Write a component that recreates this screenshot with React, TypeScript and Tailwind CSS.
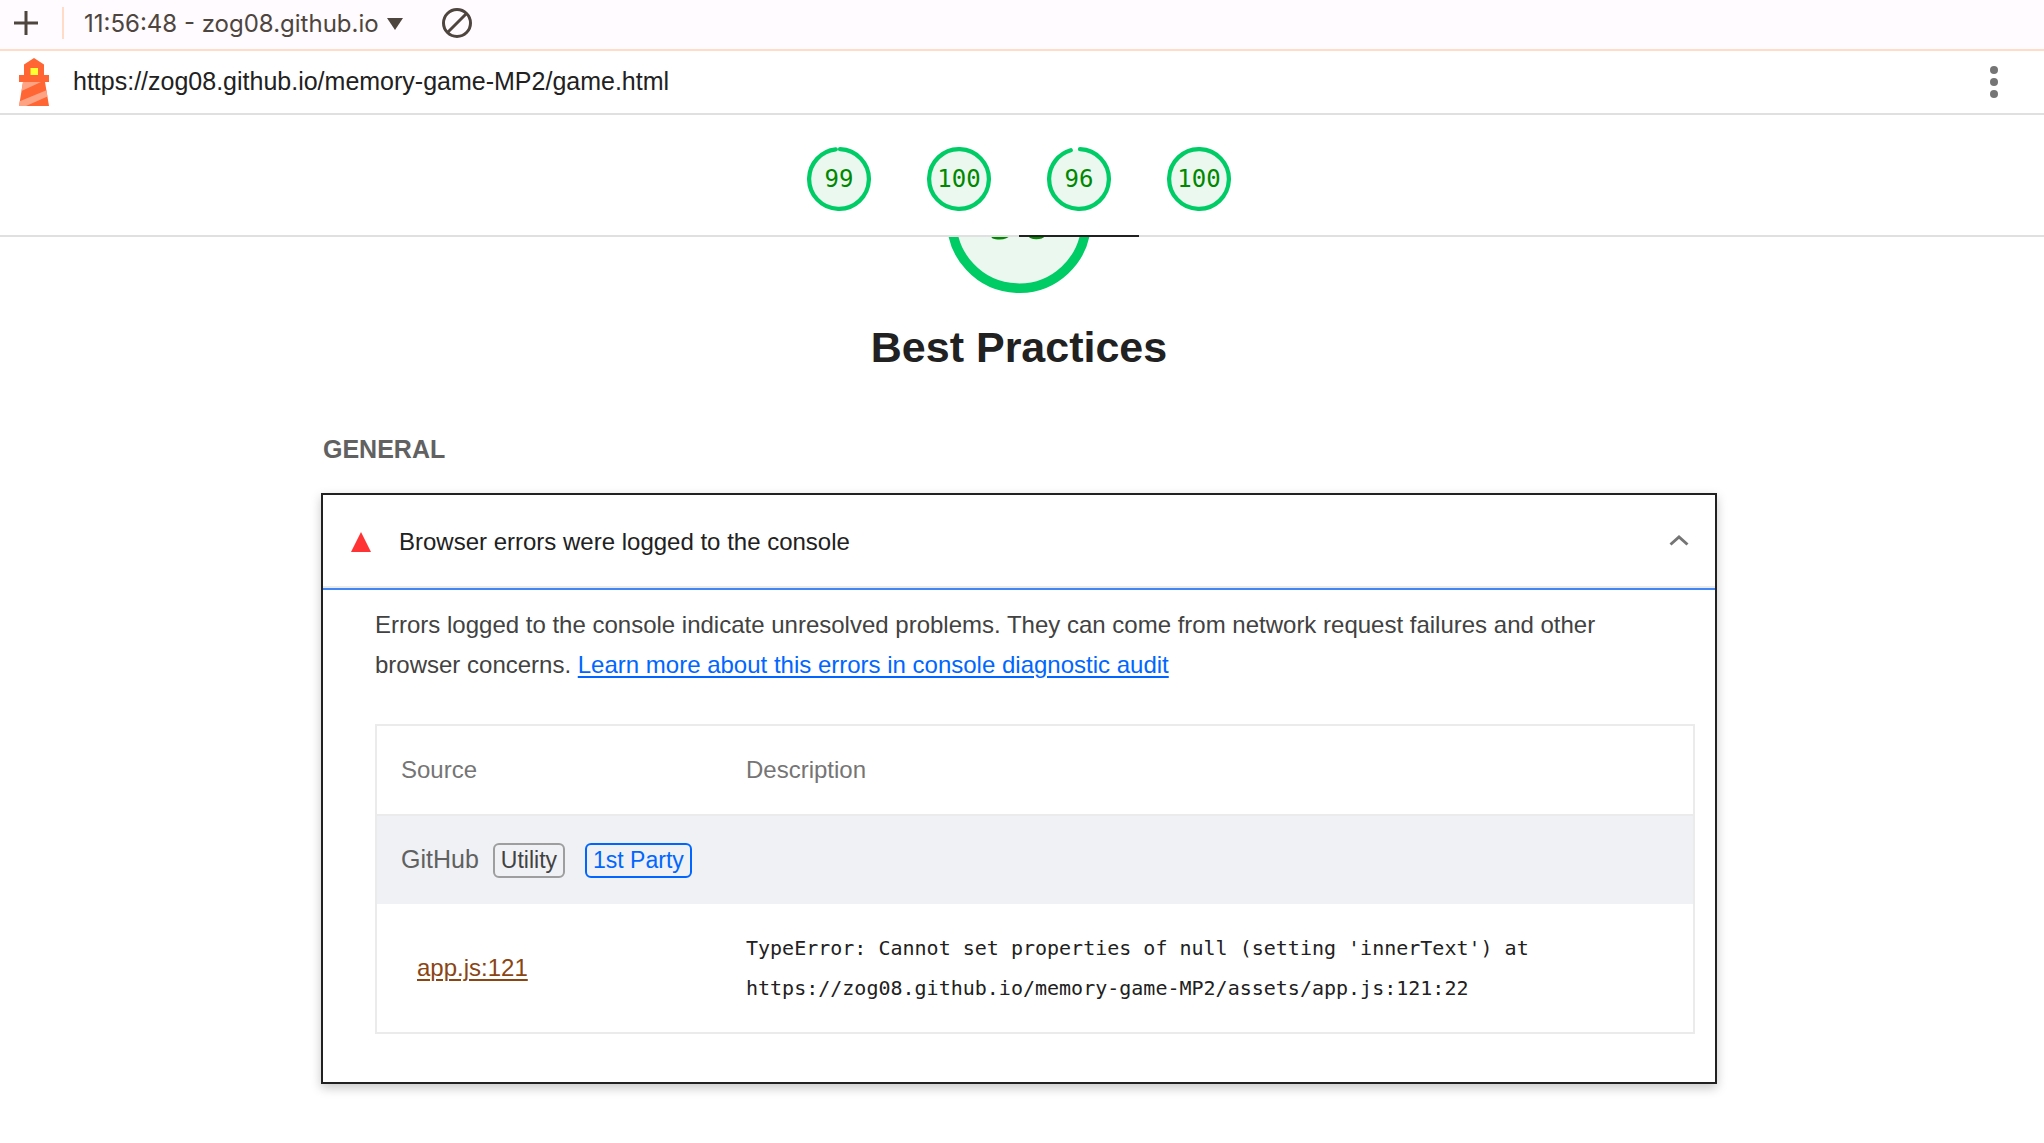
import React from 'react';

const SANS = "font-['Liberation_Sans',Arial,sans-serif]";

type GaugeProps = { score: number; arc: number; className: string };

function GaugeRing({ score, arc, className }: GaugeProps) {
  return (
    <svg viewBox="0 0 120 120" className={className} role="img" aria-label={`Score ${score}`}>
      <circle cx="60" cy="60" r="56" fill="#eaf8f0" stroke="none" />
      <circle
        cx="60"
        cy="60"
        r="56"
        fill="none"
        stroke="#00cc66"
        strokeWidth="8"
        strokeLinecap="round"
        pathLength={100}
        strokeDasharray={`${arc} 100`}
        transform="rotate(-88 60 60)"
      />
    </svg>
  );
}

const scores = [
  { id: 'performance', score: 99, arc: 97.7, active: false },
  { id: 'accessibility', score: 100, arc: 100, active: false },
  { id: 'best-practices', score: 96, arc: 95, active: true },
  { id: 'seo', score: 100, arc: 100, active: false },
];

function Lighthouse() {
  return (
    <svg viewBox="0 0 30 48" className="h-12 w-[30px]" aria-hidden="true">
      <path d="M15 0 5 6.500V17H0v7h4L0 48h30l-4-24h4v-7h-5V6.500z" fill="#ff6633" />
      <path d="M4 24h18L2.500 33zM27.400 32.300l1 6.200L7 48H0l.8-4.700z" fill="#ffa385" />
      <path d="M11.500 10h7.500v7h-7.500z" fill="#ffff33" />
    </svg>
  );
}

export default function App() {
  return (
    <div className={`min-h-screen bg-white text-2xl text-[#212121] ${SANS}`}>
      <div className="flex h-[51px] items-center border-b-2 border-[#ffdbc8] bg-[#fffbff] pb-1 pl-3 font-[Inter,sans-serif] text-2xl text-[#4d453e]">
        <button type="button" aria-label="New report" className="flex size-7 items-center justify-center">
          <svg viewBox="0 0 28 28" className="size-7" fill="none" stroke="currentColor" strokeWidth="3" aria-hidden="true">
            <path d="M14 2v24M2 14h24" />
          </svg>
        </button>
        <div className="ml-[22px] h-8 w-0.5 bg-[#ffdbc8]" />
        <button type="button" className="ml-5 flex items-center gap-2 pt-0.5 whitespace-nowrap">
          11:56:48 - zog08.github.io
          <svg viewBox="0 0 16 12" className="h-3 w-4" fill="currentColor" aria-hidden="true">
            <path d="M0 0h16L8 12z" />
          </svg>
        </button>
        <button type="button" aria-label="Clear all" className="ml-[38px]">
          <svg viewBox="0 0 32 32" className="size-8" fill="none" stroke="currentColor" strokeWidth="3" aria-hidden="true">
            <circle cx="16" cy="16" r="13.500" />
            <path d="M25.500 6.500 6.500 25.500" />
          </svg>
        </button>
      </div>

      <header className="flex h-16 items-center border-b-2 border-[#e0e0e0] pl-[19px]">
        <Lighthouse />
        <a href="#report" className="ml-6 text-[25px]">
          https://zog08.github.io/memory-game-MP2/game.html
        </a>
        <button type="button" aria-label="Tools menu" className="mr-[34px] ml-auto">
          <svg viewBox="0 0 32 32" className="size-8" fill="#757575" aria-hidden="true">
            <circle cx="16" cy="4" r="4" />
            <circle cx="16" cy="16" r="4" />
            <circle cx="16" cy="28" r="4" />
          </svg>
        </button>
      </header>

      <nav aria-label="Category scores" className="flex h-[122px] justify-center border-b-2 border-[#e0e0e0] pr-1.5">
        {scores.map((item) => (
          <a
            key={item.id}
            href={`#${item.id}`}
            className="relative flex w-[120px] justify-center pt-8 font-['DejaVu_Sans_Mono',monospace] text-[#008800]"
          >
            <div className="relative size-16">
              <GaugeRing score={item.score} arc={item.arc} className="size-16" />
              <span className="absolute inset-0 flex items-center justify-center">{item.score}</span>
            </div>
            {item.active && <span className="absolute inset-x-0 -bottom-0.5 h-0.5 bg-[#212121]" />}
          </a>
        ))}
      </nav>

      <main id="best-practices" className="pr-1.5">
        <div className="flex h-14 flex-col items-center justify-end overflow-hidden">
          <div className="relative size-36 shrink-0">
            <GaugeRing score={96} arc={95} className="size-36" />
            <span className="absolute inset-0 flex items-center justify-center pb-1 font-['DejaVu_Sans_Mono',monospace] text-[56px] leading-none text-[#008800]">
              96
            </span>
          </div>
        </div>
        <h1 className="mt-[27px] text-center text-[43px] leading-[54px] font-bold">Best Practices</h1>

        <section className="mx-auto max-w-[1396px]">
          <h2 className="mt-[55px] pl-0.5 text-[25px] leading-10 font-bold text-[#616161]">GENERAL</h2>

          <details open className="mt-6 border-2 border-[#212121] shadow-[0_4px_10px_rgba(0,0,0,0.22)]">
            <summary className="flex h-[95px] cursor-pointer list-none items-center border-b-2 border-[#4285f4] pr-[22px] pl-7 shadow-[inset_0_-2px_0_#ebebeb]">
              <svg viewBox="0 0 20 20" className="size-5" fill="#ff3333" aria-hidden="true">
                <path d="M10 0 20 20H0z" />
              </svg>
              <span className="ml-7">Browser errors were logged to the console</span>
              <svg
                viewBox="0 0 28 28"
                className="ml-auto size-7"
                fill="none"
                stroke="#757575"
                strokeWidth="3"
                aria-hidden="true"
              >
                <path d="M5.500 16.500 14 9l8.500 7.500" />
              </svg>
            </summary>

            <div className="pt-[15px] pr-5 pb-12 pl-[52px]">
              <p className="max-w-[1260px] leading-10 text-[#424242]">
                Errors logged to the console indicate unresolved problems. They can come from network request failures and
                other browser concerns.{' '}
                <a href="#errors-in-console" className="text-[#0066ff] underline decoration-2 underline-offset-3">
                  Learn more about this errors in console diagnostic audit
                </a>
              </p>

              <table className="mt-[39px] w-full border-separate border-spacing-0 border-2 border-[#ebebeb] text-left">
                <thead>
                  <tr className="h-[90px] text-[#757575]">
                    <th className="w-[345px] border-b-2 border-[#ebebeb] pl-6 font-normal">Source</th>
                    <th className="border-b-2 border-[#ebebeb] pl-6 font-normal">Description</th>
                  </tr>
                </thead>
                <tbody>
                  <tr className="h-[88px] bg-[#eff1f5]">
                    <td colSpan={2} className="pl-6">
                      <div className="flex items-center text-[25px] text-[#616161]">
                        GitHub
                        <span className="ml-3.5 rounded-md border-2 border-[#9e9e9e] px-1.5 text-[23px] leading-[31px] text-[#424242]">
                          Utility
                        </span>
                        <span className="ml-5 rounded-md border-2 border-[#0066ff] px-1.5 text-[23px] leading-[31px] text-[#0066ff]">
                          1st Party
                        </span>
                      </div>
                    </td>
                  </tr>
                  <tr className="h-32">
                    <td className="pl-10">
                      <a href="#app-js-121" className="text-[#8b4513] underline decoration-2 underline-offset-3">
                        app.js:121
                      </a>
                    </td>
                    <td className="pl-6 font-['DejaVu_Sans_Mono',monospace] text-xl leading-10">
                      TypeError: Cannot set properties of null (setting 'innerText') at
                      <br />
                      https://zog08.github.io/memory-game-MP2/assets/app.js:121:22
                    </td>
                  </tr>
                </tbody>
              </table>
            </div>
          </details>
        </section>
      </main>
    </div>
  );
}
